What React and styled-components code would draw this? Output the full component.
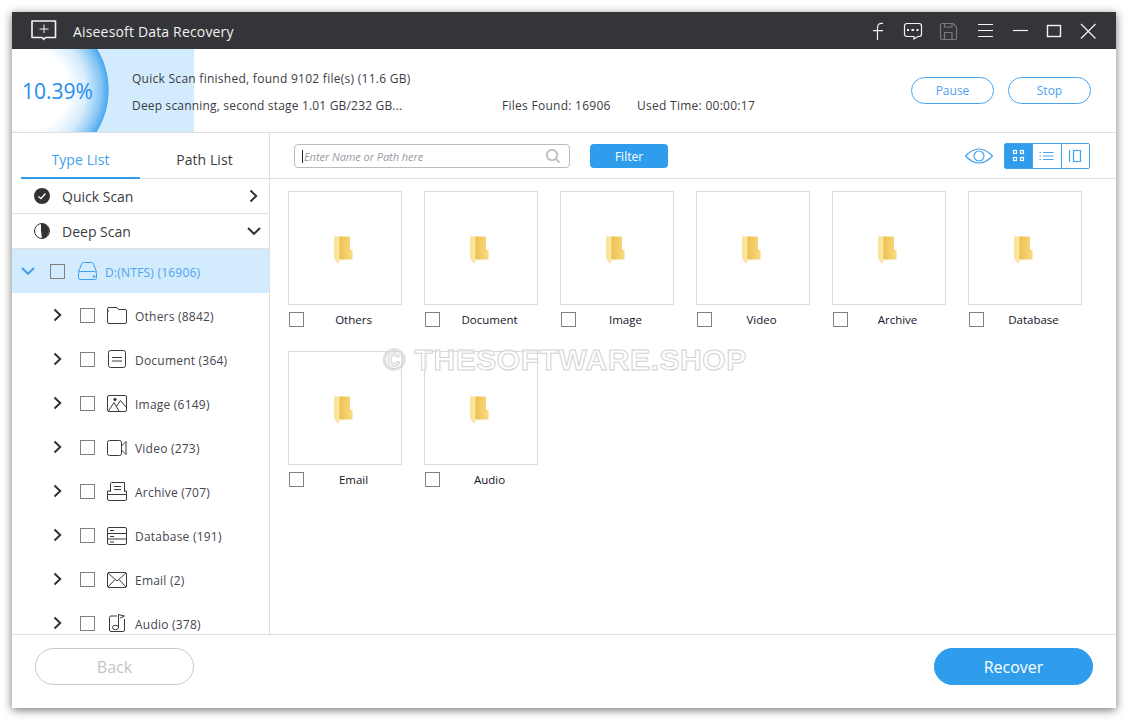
import React from 'react';
import styled, { createGlobalStyle } from 'styled-components';

const Global = createGlobalStyle`
  html, body { margin: 0; background: #fff; }
  body { width: 1128px; height: 720px; overflow: hidden; font-family: "Open Sans", "Noto Sans", sans-serif; }
  * { box-sizing: border-box; }
`;

const BLUE = '#2f9cec';
const LINE = '#e0e0e0';

const Page = styled.div`
  width: 1128px; height: 720px; padding: 12px;
`;
const Win = styled.div`
  width: 1104px; height: 696px; display: flex; flex-direction: column; background: #fff;
  box-shadow: 0 2px 9px rgba(0,0,0,.55);
`;
const TitleBar = styled.header`
  height: 37px; flex: none; background: #343538; color: #f2f2f2; display: flex; align-items: center;
  padding: 0 10px 0 18px;
`;
const Logo = styled.svg`width: 28px; height: 24px; margin-right: 15px; margin-top: 1px;`;
const TitleText = styled.div`font-size: 14px; letter-spacing: .17px; flex: 1; margin-top: 1px;`;
const TitleIcon = styled.svg`
  width: 35px; height: 37px; display: block; fill: none; stroke: ${p => p.$dim ? '#77787a' : '#f4f4f4'}; stroke-width: 1.2;
`;

const ScanPanel = styled.section`
  height: 84px; flex: none; display: flex; align-items: center; border-bottom: 1px solid ${LINE};
  background:
    radial-gradient(circle 80px at 17px 41px, #fff 0, #fff 50%, #d6ecfc 72%, #86c5f4 90%, #4aa8ef 99%, transparent 100%),
    linear-gradient(to right, #d2ebfd 182px, #fff 182px);
`;
const Percent = styled.div`
  width: 120px; flex: none; padding-left: 10px; font-size: 21px; color: #1e8df0; letter-spacing: 0; margin-top: 1px;
`;
const ScanInfo = styled.div`
  flex: 1; display: flex; flex-direction: column; gap: 9px; font-size: 12px; color: #3c3c44; letter-spacing: .27px; margin-top: 4px;
`;
const InfoRow = styled.div`display: flex; line-height: 18px; white-space: nowrap;`;
const InfoCell = styled.span`width: ${p => p.$w}px; flex: none; letter-spacing: ${p => p.$ls || '.27px'};`;
const ScanActions = styled.div`display: flex; gap: 14px; padding-right: 25px; margin-top: -1px;`;
const OutlineBtn = styled.button`
  width: 83px; height: 27px; border: 1px solid #4aa5ee; border-radius: 14px; background: #fff; color: #4e9fee;
  font: 12px "Open Sans", sans-serif; padding: 0;
`;

const Body = styled.div`flex: 1; min-height: 0; display: flex;`;
const Sidebar = styled.aside`width: 258px; flex: none; border-right: 1px solid ${LINE}; overflow: hidden; display: flex; flex-direction: column;`;
const Tabs = styled.div`height: 46px; flex: none; display: flex; padding-left: 9px;`;
const Tab = styled.div`
  width: ${p => p.$w}px; padding-top: 15px; text-align: center; font-size: 14px; line-height: 24px; letter-spacing: .08px;
  color: ${p => p.$on ? '#3f9fee' : '#3c3c44'};
  border-bottom: ${p => p.$on ? `2px solid ${BLUE}` : `1px solid ${LINE}`};
`;
const ScanRow = styled.div`
  height: 35px; flex: none; display: flex; align-items: center; padding: 0 8px 0 22px; gap: 12px;
  border-bottom: 1px solid ${LINE}; font-size: 14px; color: #3c3c44;
`;
const ScanRowLabel = styled.span`flex: 1;`;
const StatusIcon = styled.svg`width: 16px; height: 16px; flex: none;`;
const Chevron = styled.svg`
  width: 14px; height: 14px; flex: none; fill: none; stroke: ${p => p.$c || '#333'}; stroke-width: 2;
`;
const TreeRow = styled.div`
  height: 44px; flex: none; display: flex; align-items: center; padding-left: ${p => p.$root ? 9 : 39}px;
  background: ${p => p.$root ? '#d2ebfd' : 'transparent'}; color: ${p => p.$root ? '#4ea3ee' : '#45454d'}; font-size: 12px;
  white-space: nowrap;
`;
const TreeLabel = styled.span`margin-top: 2px; letter-spacing: .22px;`;
const Check = styled.span`
  width: 15px; height: 15px; flex: none; display: block; background: ${p => p.$root ? 'transparent' : '#fff'}; border: 1px solid #808080;
`;
const TreeCheck = styled(Check)`margin: 0 12px 0 15px;`;
const TreeIcon = styled.svg`
  width: 20px; height: 20px; flex: none; margin-right: 8px; fill: none;
  stroke: ${p => p.$c || '#3a3a3a'}; stroke-width: 1;
`;
const Main = styled.main`flex: 1; min-width: 0; position: relative;`;
const Toolbar = styled.div`
  height: 46px; display: flex; align-items: center; padding: 1px 26px 0 24px; border-bottom: 1px solid ${LINE};
`;
const Search = styled.div`
  width: 276px; height: 24px; border: 1px solid #bbb; border-radius: 4px; display: flex; align-items: center;
  padding: 0 8px 0 7px; font-size: 11px; font-style: italic; color: #9a9aa2;
`;
const Caret = styled.span`width: 1px; height: 13px; background: #222; margin-right: 1px;`;
const SearchText = styled.span`flex: 1; letter-spacing: -.06px;`;
const SearchIcon = styled.svg`width: 16px; height: 16px; fill: none; stroke: #c4c4c4; stroke-width: 2;`;
const FilterBtn = styled.button`
  width: 78px; height: 24px; margin-left: 20px; border: 0; border-radius: 4px; background: ${BLUE}; color: #fff;
  font: 12px "Open Sans", sans-serif; padding: 0;
`;
const Eye = styled.svg`width: 30px; height: 20px; margin-left: auto; margin-right: 10px; fill: none; stroke: #45a4ee; stroke-width: 1.2;`;
const ViewToggle = styled.div`
  display: flex; width: 86px; height: 26px; border: 1px solid #45a4ee; border-radius: 2px; margin-top: -1px;
`;
const ViewBtn = styled.div`
  flex: 1; display: flex; align-items: center; justify-content: center;
  background: ${p => p.$on ? BLUE : '#fff'}; border-left: ${p => p.$first ? '0' : '1px solid #45a4ee'};
`;
const ViewIcon = styled.svg`width: 16px; height: 16px; fill: none; stroke: ${p => p.$on ? '#fff' : '#45a4ee'}; stroke-width: 1.2;`;
const Grid = styled.div`
  display: grid; grid-template-columns: repeat(6, 114px); column-gap: 22px; row-gap: 24px; padding: 12px 0 0 18px;
`;
const Cell = styled.div`display: flex; flex-direction: column;`;
const Card = styled.div`
  width: 114px; height: 114px; border: 1px solid #dadada; display: flex; align-items: center; justify-content: center;
`;
const CardFolder = styled.svg`width: 19px; height: 28px; margin: 3px 0 0 -3px;`;
const Meta = styled.div`height: 15px; margin-top: 7px; padding-left: 1px; display: flex; align-items: center;`;
const MetaLabel = styled.span`flex: 1; text-align: center; font-size: 11.5px; color: #15121f; padding: 0 0 0 1px;`;
const Watermark = styled.div`
  position: absolute; left: 113px; top: 210px; font: 700 30px "Liberation Sans", sans-serif; letter-spacing: .55px; white-space: nowrap;
  color: rgba(255,255,255,.55); -webkit-text-stroke: 1px #d2d2d2; pointer-events: none;
`;
const Footer = styled.footer`
  height: 74px; flex: none; border-top: 1px solid ${LINE}; display: flex; align-items: flex-start; justify-content: space-between;
  padding: 13px 23px 0 23px;
`;
const PillBtn = styled.button`
  width: 159px; height: 37px; border-radius: 19px; padding: 0; font: 16px "Open Sans", sans-serif;
  border: 1px solid ${p => p.$primary ? BLUE : '#c8c8c8'};
  background: ${p => p.$primary ? BLUE : '#fff'}; color: ${p => p.$primary ? '#fff' : '#c4c4c4'};
`;

const Right = ({ c }) => <Chevron $c={c} viewBox="0 0 14 14"><path d="M3.5 1.5 9.2 7 3.5 12.5" /></Chevron>;
const Down = ({ c }) => <Chevron $c={c} viewBox="0 0 14 14"><path d="M1 4 7 9.8 13 4" /></Chevron>;

const icons = {
  drive: <><path d="M1.500 11 4.500 3Q5 1.500 6.500 1.500H14.500Q16 1.500 16.500 3L19.500 11" /><rect x="1.500" y="10.500" width="18" height="8" rx="2" /><circle cx="17" cy="15.500" r=".8" fill="#3f9fee" /></>,
  folder: <path d="M.5 6V4Q.5 2.500 2 2.500H9Q10.500 2.500 11 4L11.500 4.500H18Q19.500 4.500 19.500 6V17Q19.500 18.500 18 18.500H2Q.5 18.500 .5 17Z M.5 6H2" />,
  doc: <><rect x="1.500" y="1.500" width="17" height="17" rx="2" /><path d="M5 8.500H15M5 12H15" /></>,
  image: <><rect x=".5" y="2.500" width="19" height="16" rx="1.500" /><circle cx="8" cy="6.500" r="1.200" fill="#3a3a3a" /><path d="M1.500 18 7 9.500 12 18M9 14 13.500 7.500 19 14" /></>,
  video: <><rect x=".5" y="3.500" width="14" height="15" rx="2" /><path d="M14.500 9 19 4.500V17.500L14.500 13" /></>,
  archive: <><path d="M3.500 11V2.500Q3.500 1.500 4.500 1.500H17.500V11" /><path d="M7 5.500H14M7 8.500H14" /><path d="M3.500 10H.5V18Q.5 19.500 2 19.500H18Q19.500 19.500 19.500 18V10H17" /><path d="M.5 13.500H19.500" /></>,
  database: <><rect x=".5" y="2.500" width="19" height="17" rx="1.500" /><path d="M.5 8.500H19.500M.5 14H19.500M3 5.500H7M3 11.500H7M3 17H7" /></>,
  email: <><rect x=".5" y="3.500" width="19" height="15" rx="1.500" /><path d="M1 4 10 12 19 4M1 18 8 10.500M19 18 12 10.500" /></>,
  audio: <><path d="M10 3H4Q2.500 3 2.500 4.500V17Q2.500 18.500 4 18.500H16Q17.500 18.500 17.500 17V6" /><path d="M11.500 14.500V1.500L17.500 3 13 5" /><ellipse cx="8.500" cy="14.500" rx="3" ry="2.200" /></>,
};

const tree = [
  ['Others (8842)', 'folder'], ['Document (364)', 'doc'], ['Image (6149)', 'image'], ['Video (273)', 'video'],
  ['Archive (707)', 'archive'], ['Database (191)', 'database'], ['Email (2)', 'email'], ['Audio (378)', 'audio'],
];
const cards = ['Others', 'Document', 'Image', 'Video', 'Archive', 'Database', 'Email', 'Audio'];

const FolderArt = () => (
  <CardFolder viewBox="0 0 19 28">
    <defs>
      <linearGradient id="fb" x1="0" x2="1" y1="0" y2="0">
        <stop offset="0" stopColor="#e8bc50" /><stop offset="1" stopColor="#fbdc80" />
      </linearGradient>
    </defs>
    <path d="M4 .5H16V14H18.500V23.500H5Z" fill="url(#fb)" />
    <path d="M0 .5H5.500V27.500L4 27 0 22.500Z" fill="#fde49c" />
  </CardFolder>
);

export default function App() {
  return (
    <Page>
      <Global />
      <Win>
        <TitleBar>
          <Logo viewBox="0 0 28 24" fill="none" stroke="#f4f4f4" strokeWidth="1.600">
            <path d="M2 2H25.500V18.500H15.500L13.500 20.500 12.500 18.500H2Z" strokeLinejoin="round" />
            <path d="M14 5.500V14M9.500 10H18.500" strokeWidth="1" />
          </Logo>
          <TitleText>Aiseesoft Data Recovery</TitleText>
          <TitleIcon viewBox="0 0 35 37"><path d="M22 11.500Q16.500 10.500 16.500 16V28M12 18.700H22" /></TitleIcon>
          <TitleIcon viewBox="0 0 35 37"><path d="M11 11.500H23Q25.500 11.500 25.500 14V22Q25.500 24.500 23 24.500H22L18 27V24.500H11Q8.500 24.500 8.500 22V14Q8.500 11.500 11 11.500Z" /><path d="M11 18H13M15.500 18H18M20.500 18H22.500" strokeWidth="2" /></TitleIcon>
          <TitleIcon $dim viewBox="0 0 35 37"><path d="M9.500 13Q9.500 11.500 11 11.500H22L25.500 15V26Q25.500 27.500 24 27.500H11Q9.500 27.500 9.500 26Z" /><path d="M13.500 27.500V20.500H21V27.500M13.500 11.500V15H21V11.500" /></TitleIcon>
          <TitleIcon viewBox="0 0 35 37"><path d="M12 12.500H27M12 18.500H27M12 24.500H27" /></TitleIcon>
          <TitleIcon viewBox="0 0 35 37"><path d="M12 18.500H27" /></TitleIcon>
          <TitleIcon viewBox="0 0 35 37"><rect x="11.500" y="13.500" width="13" height="11" strokeWidth="1.400" /></TitleIcon>
          <TitleIcon viewBox="0 0 35 37"><path d="M10 12 24.500 26.500M24.500 12 10 26.500" /></TitleIcon>
        </TitleBar>

        <ScanPanel>
          <Percent>10.39%</Percent>
          <ScanInfo>
            <InfoRow>Quick Scan finished, found 9102 file(s) (11.6 GB)</InfoRow>
            <InfoRow>
              <InfoCell $w={370} $ls=".18px">Deep scanning, second stage 1.01 GB/232 GB...</InfoCell>
              <InfoCell $w={135}>Files Found: 16906</InfoCell>
              <InfoCell $w={140}>Used Time: 00:00:17</InfoCell>
            </InfoRow>
          </ScanInfo>
          <ScanActions>
            <OutlineBtn>Pause</OutlineBtn>
            <OutlineBtn>Stop</OutlineBtn>
          </ScanActions>
        </ScanPanel>

        <Body>
          <Sidebar>
            <Tabs>
              <Tab $on $w={119}>Type List</Tab>
              <Tab $w={129}>Path List</Tab>
            </Tabs>
            <ScanRow>
              <StatusIcon viewBox="0 0 16 16"><circle cx="8" cy="8" r="8" fill="#333" /><path d="M4.500 8.500 7 10.500 11.500 5.500" fill="none" stroke="#fff" strokeWidth="1.300" /></StatusIcon>
              <ScanRowLabel>Quick Scan</ScanRowLabel>
              <Right />
            </ScanRow>
            <ScanRow>
              <StatusIcon viewBox="0 0 16 16"><circle cx="8" cy="8" r="7.500" fill="#fff" stroke="#333" /><path d="M7 .5A7.500 7.500 0 0 1 8 15.500L7 8Z" fill="#333" /></StatusIcon>
              <ScanRowLabel>Deep Scan</ScanRowLabel>
              <Down />
            </ScanRow>
            <TreeRow $root>
              <Down c="#3f9fee" />
              <TreeCheck $root />
              <TreeIcon $c="#3f9fee" viewBox="0 0 20 20">{icons.drive}</TreeIcon>
              <TreeLabel>D:(NTFS) (16906)</TreeLabel>
            </TreeRow>
            {tree.map(([label, icon]) => (
              <TreeRow key={label}>
                <Right />
                <TreeCheck />
                <TreeIcon viewBox="0 0 20 20">{icons[icon]}</TreeIcon>
                <TreeLabel>{label}</TreeLabel>
              </TreeRow>
            ))}
          </Sidebar>

          <Main>
            <Toolbar>
              <Search>
                <Caret />
                <SearchText>Enter Name or Path here</SearchText>
                <SearchIcon viewBox="0 0 16 16"><circle cx="7" cy="7" r="5.200" /><path d="M11 11 14.500 14.500" /></SearchIcon>
              </Search>
              <FilterBtn>Filter</FilterBtn>
              <Eye viewBox="0 0 30 20"><path d="M1.500 10Q15-4 28.500 10 15 24 1.500 10Z" /><circle cx="15" cy="10" r="5" /></Eye>
              <ViewToggle>
                <ViewBtn $on $first>
                  <ViewIcon $on viewBox="0 0 16 16"><rect x="2.500" y="2.500" width="3" height="3" /><rect x="9.500" y="2.500" width="3" height="3" /><rect x="2.500" y="9.500" width="3" height="3" /><rect x="9.500" y="9.500" width="3" height="3" /></ViewIcon>
                </ViewBtn>
                <ViewBtn>
                  <ViewIcon viewBox="0 0 16 16"><path d="M4 4.500H14.500M4 8H14.500M4 11.500H14.500M.5 4.500H2M.5 8H2M.5 11.500H2" /></ViewIcon>
                </ViewBtn>
                <ViewBtn>
                  <ViewIcon viewBox="0 0 16 16"><path d="M2.500 2V14" /><rect x="6.500" y="2.500" width="7" height="11" /></ViewIcon>
                </ViewBtn>
              </ViewToggle>
            </Toolbar>
            <Grid>
              {cards.map(c => (
                <Cell key={c}>
                  <Card><FolderArt /></Card>
                  <Meta><Check /><MetaLabel>{c}</MetaLabel></Meta>
                </Cell>
              ))}
            </Grid>
            <Watermark>© THESOFTWARE.SHOP</Watermark>
          </Main>
        </Body>

        <Footer>
          <PillBtn>Back</PillBtn>
          <PillBtn $primary>Recover</PillBtn>
        </Footer>
      </Win>
    </Page>
  );
}
